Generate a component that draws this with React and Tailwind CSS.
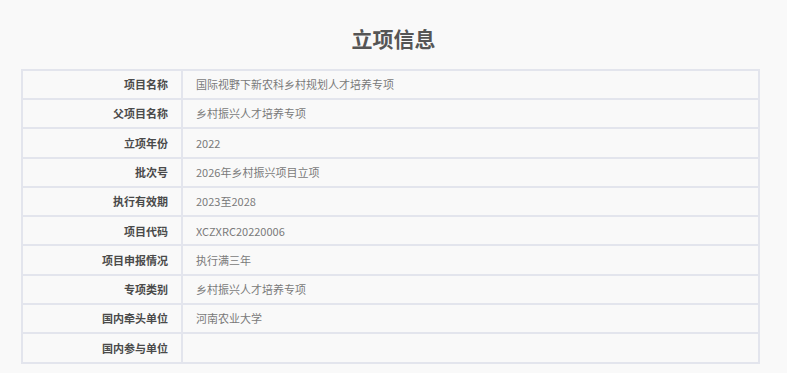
import React from 'react';

const rows = [
  ['项目名称', '国际视野下新农科乡村规划人才培养专项'],
  ['父项目名称', '乡村振兴人才培养专项'],
  ['立项年份', '2022'],
  ['批次号', '2026年乡村振兴项目立项'],
  ['执行有效期', '2023至2028'],
  ['项目代码', 'XCZXRC20220006'],
  ['项目申报情况', '执行满三年'],
  ['专项类别', '乡村振兴人才培养专项'],
  ['国内牵头单位', '河南农业大学'],
  ['国内参与单位', ''],
];

const App = () => {
  return (
    <div className="min-h-[373px] w-[787px] bg-[#f9f9f9] font-['Microsoft_YaHei','Noto_Sans_CJK_SC',sans-serif]">
      <h1 className="pt-[23px] h-[69px] text-center text-[21px] leading-[30px] font-bold text-[#555]">立项信息</h1>

      <div className="ml-[21px] w-[739px] border-2 border-[#e3e5ed]">
        {rows.map(([label, value], i) => (
          <div key={label} className={`flex items-center ${i > 0 ? 'h-[29.3px] border-t-2 border-[#e3e5ed]' : 'h-[27px]'}`}>
            <div className="w-[158px] h-full flex items-center justify-end pr-[13px] text-[11px] font-bold text-[#4a4a4a]">
              {label}
            </div>
            <div className="flex-1 h-full flex items-center pl-[13px] border-l-2 border-[#e3e5ed] text-[11px] text-[#7a7a7a]">
              {value}
            </div>
          </div>
        ))}
      </div>
    </div>
  );
};

export default App;
